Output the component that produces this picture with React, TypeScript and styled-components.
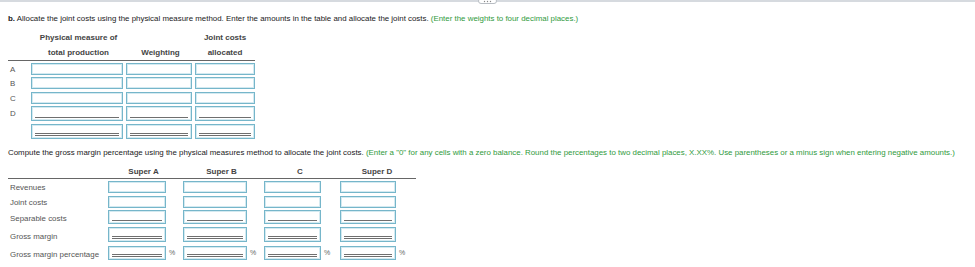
import styled, { createGlobalStyle } from "styled-components";

const GlobalStyle = createGlobalStyle`
  html, body {
    margin: 0;
    padding: 0;
    background: #ffffff;
    font-family: "Liberation Sans", Arial, sans-serif;
  }
`;

const Page = styled.main`
  width: 975px;
  height: 267px;
  overflow: hidden;
  position: relative;
`;

const TopBar = styled.div`
  height: 2px;
  background: #d6dadf;
`;

const Grip = styled.div`
  position: absolute;
  left: 478px;
  top: -2px;
  width: 19px;
  height: 6px;
  box-sizing: border-box;
  border: 1px solid #b8bdc3;
  border-radius: 3px;
  background: #fff;
  display: flex;
  align-items: flex-end;
  justify-content: center;
`;

const Section = styled.section<{ $top: number }>`
  padding: ${(p) => p.$top}px 0 0 8px;
`;

const Prompt = styled.p`
  margin: 0;
  font-size: 7.9px;
  line-height: 10px;
  color: #1a1a1a;
  white-space: nowrap;
`;

const Hint = styled.span`
  color: #2f9a3c;
`;

const Grid = styled.div<{ $cols: string }>`
  display: grid;
  grid-template-columns: ${(p) => p.$cols};
  align-items: end;
`;

const HeadCell = styled.div<{ $h?: number }>`
  font-size: 8px;
  font-weight: bold;
  color: #444;
  text-align: center;
  height: ${(p) => p.$h ?? 15}px;
  line-height: ${(p) => p.$h ?? 15}px;
  white-space: nowrap;
`;

const Rule = styled.div<{ $w: number }>`
  width: ${(p) => p.$w}px;
  height: 1px;
  background: #666;
`;

const RowLabel = styled.div<{ $center?: boolean }>`
  font-size: 7.9px;
  line-height: 9px;
  color: #555;
  padding-left: 2px;
  padding-bottom: ${(p) => (p.$center ? 0 : 1)}px;
  align-self: ${(p) => (p.$center ? "center" : "end")};
  white-space: nowrap;
`;

const Cell = styled.div<{ $gap?: number }>`
  display: flex;
  align-items: center;
  padding-left: ${(p) => p.$gap ?? 0}px;
`;

const Box = styled.div<{ $w: number; $h: number }>`
  box-sizing: border-box;
  width: ${(p) => p.$w}px;
  height: ${(p) => p.$h}px;
  border: 1px solid #76b6ca;
  box-shadow: inset 0 0 0 1px #d4eaf1;
  background: #fff;
  display: flex;
  flex-direction: column;
  justify-content: flex-end;
  padding: 0 3px 2px;
  gap: 1px;
`;

const Under = styled.div`
  height: 1px;
  background: #6f6f6f;
`;

const Pct = styled.span`
  font-size: 7px;
  color: #666;
  margin-left: 3px;
`;

function Input({ w, h, lines }: { w: number; h: number; lines: number }) {
  return (
    <Box $w={w} $h={h}>
      {Array.from({ length: lines }).map((_, i) => (
        <Under key={i} />
      ))}
    </Box>
  );
}

const allocCols = "23px 95px 69px 60px";
const allocWidths = [92, 66, 60];

const allocRows = [
  { label: "A", h: 12, lines: 0, mt: 2.5 },
  { label: "B", h: 12, lines: 0, mt: 2 },
  { label: "C", h: 12, lines: 0, mt: 3 },
  { label: "D", h: 14.5, lines: 1, mt: 2 },
  { label: "", h: 15.5, lines: 2, mt: 3 },
];

const marginCols = "98px 75px 81px 76px 78px";

const marginHeads = [
  { name: "Super A", w: 58 },
  { name: "Super B", w: 64 },
  { name: "C", w: 57 },
  { name: "Super D", w: 56 },
];

const marginRows = [
  { label: "Revenues", h: 12, lines: 0, pct: false, mt: 1.7 },
  { label: "Joint costs", h: 11.7, lines: 0, pct: false, mt: 3.3 },
  { label: "Separable costs", h: 13.7, lines: 1, pct: false, mt: 2.6 },
  { label: "Gross margin", h: 15, lines: 2, pct: false, mt: 3.3 },
  { label: "Gross margin percentage", h: 14.3, lines: 2, pct: true, mt: 3.4 },
];

export default function App() {
  return (
    <Page>
      <GlobalStyle />
      <TopBar />
      <Grip>
        <svg width="9" height="3" viewBox="0 0 9 3">
          <circle cx="1.5" cy="1.5" r="0.7" fill="#888" />
          <circle cx="4.5" cy="1.5" r="0.7" fill="#888" />
          <circle cx="7.5" cy="1.5" r="0.7" fill="#888" />
        </svg>
      </Grip>

      <Section $top={12}>
        <Prompt>
          <b>b.</b> Allocate the joint costs using the physical measure method. Enter the amounts in
          the table and allocate the joint costs. <Hint>(Enter the weights to four decimal places.)</Hint>
        </Prompt>

        <Grid $cols={allocCols} style={{ marginTop: 5.5 }}>
          <HeadCell />
          <HeadCell>Physical measure of</HeadCell>
          <HeadCell />
          <HeadCell>Joint costs</HeadCell>
          <HeadCell />
          <HeadCell>total production</HeadCell>
          <HeadCell>Weighting</HeadCell>
          <HeadCell>allocated</HeadCell>
        </Grid>
        <Rule $w={247} />

        {allocRows.map((r, i) => (
          <Grid key={i} $cols={allocCols} style={{ marginTop: r.mt }}>
            <RowLabel $center>{r.label}</RowLabel>
            {allocWidths.map((w, j) => (
              <Cell key={j}>
                <Input w={w} h={r.h} lines={r.lines} />
              </Cell>
            ))}
          </Grid>
        ))}
      </Section>

      <Section $top={9}>
        <Prompt>
          Compute the gross margin percentage using the physical measures method to allocate the
          joint costs.{" "}
          <Hint>
            (Enter a "0" for any cells with a zero balance. Round the percentages to two decimal
            places, X.XX%. Use parentheses or a minus sign when entering negative amounts.)
          </Hint>
        </Prompt>

        <Grid $cols={marginCols} style={{ marginTop: 8 }}>
          <HeadCell $h={12} />
          {marginHeads.map((c) => (
            <HeadCell key={c.name} $h={12}>
              {c.name}
            </HeadCell>
          ))}
        </Grid>
        <Rule $w={408} />

        {marginRows.map((r) => (
          <Grid key={r.label} $cols={marginCols} style={{ marginTop: r.mt }}>
            <RowLabel>{r.label}</RowLabel>
            {marginHeads.map((c) => (
              <Cell key={c.name} $gap={2}>
                <Input w={c.w} h={r.h} lines={r.lines} />
                {r.pct && <Pct>%</Pct>}
              </Cell>
            ))}
          </Grid>
        ))}
      </Section>
    </Page>
  );
}
